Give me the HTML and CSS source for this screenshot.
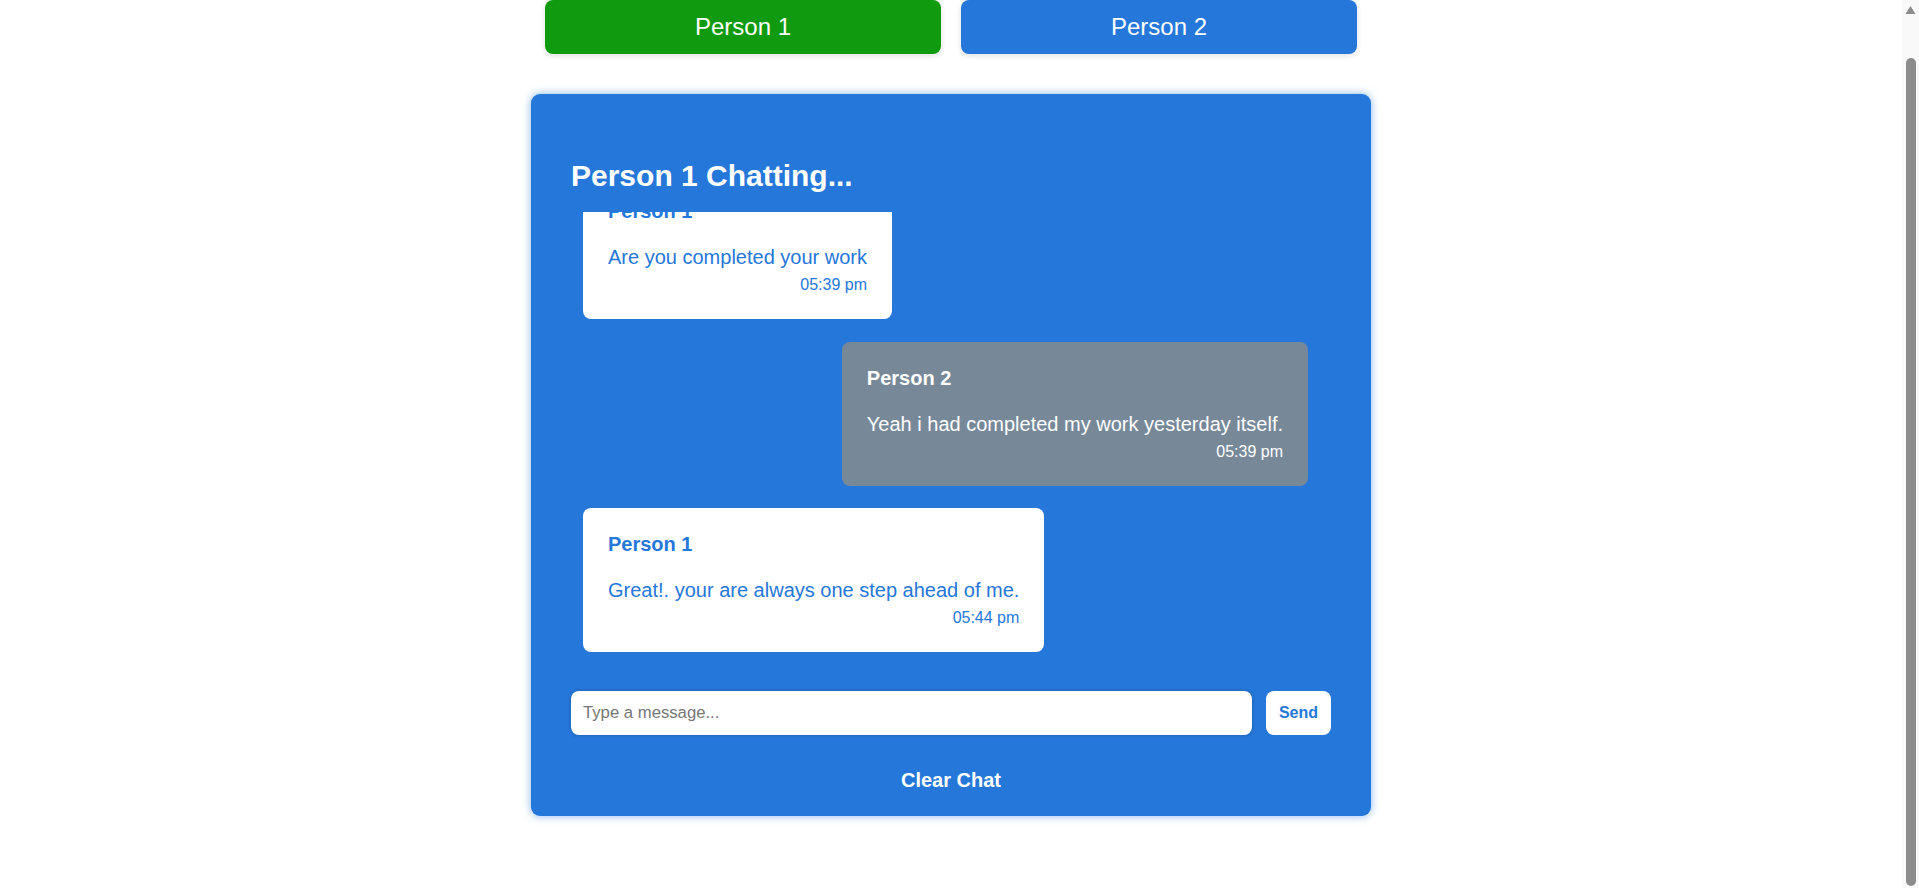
FILE: index.html
```html
<!DOCTYPE html>
<html lang="en">
<head>
<meta charset="utf-8">
<title>Chat</title>
<link rel="stylesheet" href="styles.css">
</head>
<body>
<div class="page">
  <div class="switcher">
    <button class="person-btn active">Person 1</button>
    <button class="person-btn">Person 2</button>
  </div>
  <div class="chat">
    <h2 class="chat-title">Person 1 Chatting...</h2>
    <div class="messages">
      <div class="msg mine">
        <div class="msg-name">Person 1</div>
        <div class="msg-text">Are you completed your work</div>
        <div class="msg-time">05:39 pm</div>
      </div>
      <div class="msg theirs">
        <div class="msg-name">Person 2</div>
        <div class="msg-text">Yeah i had completed my work yesterday itself.</div>
        <div class="msg-time">05:39 pm</div>
      </div>
      <div class="msg mine">
        <div class="msg-name">Person 1</div>
        <div class="msg-text">Great!. your are always one step ahead of me.</div>
        <div class="msg-time">05:44 pm</div>
      </div>
    </div>
    <div class="composer">
      <input class="composer-input" type="text" placeholder="Type a message...">
      <button class="send-btn">Send</button>
    </div>
    <button class="clear-btn">Clear Chat</button>
  </div>
</div>
<div class="scrollbar" aria-hidden="true">
  <svg class="scrollbar-arrow" width="17" height="17" viewBox="0 0 17 17"><polygon points="3.5,14 8.5,6 13.5,14" fill="#8c8c8c"/></svg>
  <div class="scrollbar-thumb"></div>
</div>
</body>
</html>
```

FILE: styles.css
```css
html, body {
  margin: 0;
  padding: 0;
  background: #ffffff;
}

body {
  font-family: "Liberation Sans", Arial, sans-serif;
  display: flex;
  height: 888px;
  overflow: hidden;
}

.page {
  flex: 1;
  min-width: 0;
  display: flex;
  flex-direction: column;
  align-items: center;
}

.switcher {
  width: 840px;
  box-sizing: border-box;
  padding: 0 14px;
  display: flex;
  gap: 20px;
}

.person-btn {
  flex: 1;
  height: 54px;
  border: none;
  border-radius: 8px;
  background: #2577da;
  color: #ffffff;
  font-family: "Liberation Sans", Arial, sans-serif;
  font-size: 24px;
  box-shadow: 0 2px 6px rgba(0, 0, 0, 0.12);
  cursor: pointer;
}

.person-btn.active {
  background: #109a10;
}

.chat {
  margin-top: 40px;
  width: 840px;
  box-sizing: border-box;
  padding: 40px 40px 24px;
  background: #2577da;
  border-radius: 9px;
  box-shadow: 0 0 8px rgba(37, 119, 218, 0.55);
  display: flex;
  flex-direction: column;
}

.chat-title {
  margin: 25px 0 19px;
  font-size: 30px;
  line-height: 34px;
  font-weight: bold;
  color: #ffffff;
}

.messages {
  height: 440px;
  overflow: hidden;
  display: flex;
  flex-direction: column;
  justify-content: flex-end;
  gap: 22.5px;
  padding: 0 23px 12px 12px;
}

.msg {
  flex-shrink: 0;
  padding: 25px;
  border-radius: 8px;
  box-sizing: border-box;
}

.msg.mine {
  align-self: flex-start;
  background: #ffffff;
  color: #2577da;
}

.msg.theirs {
  align-self: flex-end;
  background: #778899;
  color: #ffffff;
}

.msg-name {
  font-size: 20px;
  line-height: 23px;
  font-weight: bold;
  margin-bottom: 23px;
}

.msg-text {
  font-size: 20px;
  line-height: 23px;
  margin-bottom: 7px;
}

.msg-time {
  font-size: 16px;
  line-height: 18px;
  text-align: right;
}

.composer {
  margin-top: 27px;
  display: flex;
  gap: 14px;
  height: 44px;
}

.composer-input {
  flex: 1;
  min-width: 0;
  height: 44px;
  box-sizing: border-box;
  border: none;
  border-radius: 8px;
  padding: 0 12px;
  font-family: "Liberation Sans", Arial, sans-serif;
  font-size: 16.7px;
  background: #ffffff;
  box-shadow: 0 0 4px rgba(0, 0, 0, 0.2);
  outline: none;
}

.composer-input::placeholder {
  color: #767676;
}

.send-btn {
  height: 44px;
  padding: 0 13px;
  border: none;
  border-radius: 8px;
  background: #ffffff;
  color: #2577da;
  font-family: "Liberation Sans", Arial, sans-serif;
  font-size: 16px;
  font-weight: bold;
  cursor: pointer;
}

.clear-btn {
  align-self: center;
  margin-top: 34px;
  padding: 0;
  border: none;
  background: none;
  color: #ffffff;
  font-family: "Liberation Sans", Arial, sans-serif;
  font-size: 20px;
  line-height: 23px;
  font-weight: bold;
  cursor: pointer;
}

.scrollbar {
  flex-shrink: 0;
  width: 17px;
  height: 888px;
  background: #f9f9f9;
  display: flex;
  flex-direction: column;
  align-items: center;
}

.scrollbar-arrow {
  display: block;
  flex-shrink: 0;
}

.scrollbar-thumb {
  margin-top: 41px;
  width: 10px;
  height: 828px;
  border-radius: 5px;
  background: #8c8c8c;
}
```
